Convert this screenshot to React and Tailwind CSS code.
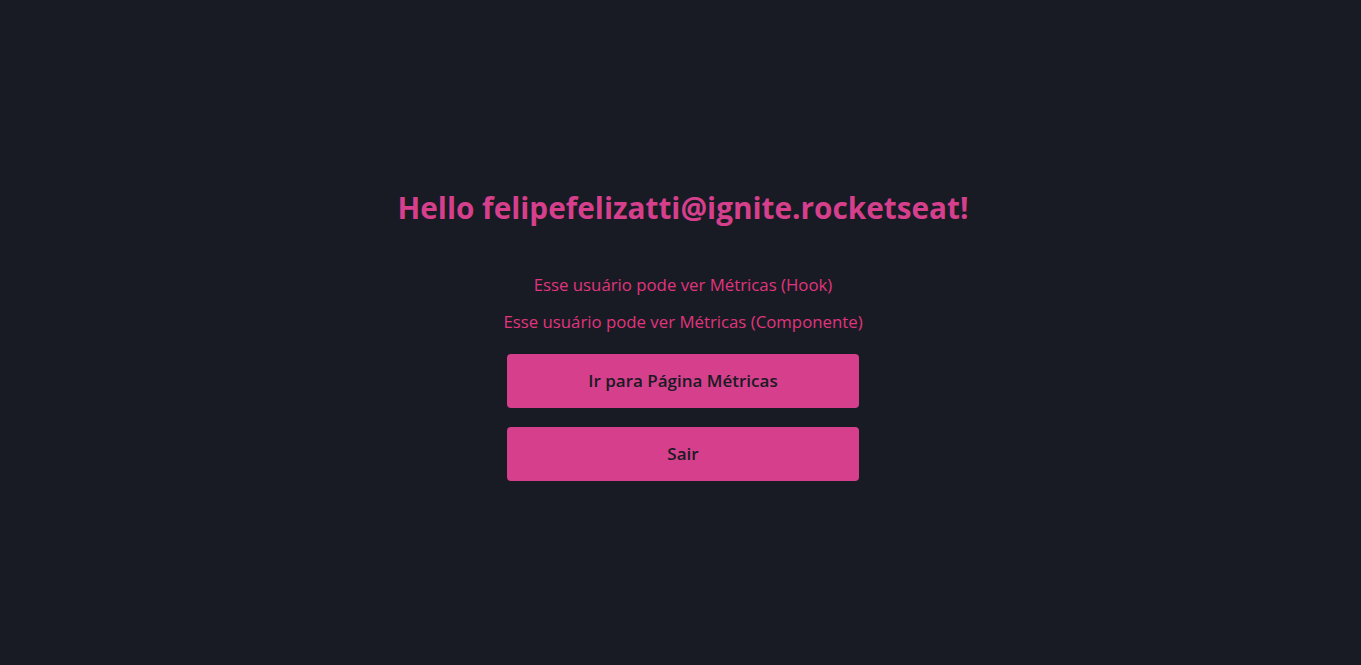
import React from 'react';

export default function App() {
  return (
    <div
      className="min-h-screen w-full bg-[#181b23] flex flex-col items-center justify-center pt-[6px] pl-[5px]"
      style={{ fontFamily: '"Open Sans", "Noto Sans", sans-serif' }}
    >
      <h1 className="text-[29.75px] leading-[36px] font-bold text-[#d53f8c]">
        Hello felipefelizatti@ignite.rocketseat!
      </h1>

      <p className="mt-[47px] text-[16.8px] leading-[24px] text-[#e0347f]">
        Esse usuário pode ver Métricas (Hook)
      </p>
      <p className="mt-[13px] text-[16.8px] leading-[24px] text-[#e0347f]">
        Esse usuário pode ver Métricas (Componente)
      </p>

      <button className="mt-[20px] w-[352px] h-[54px] rounded bg-[#d53f8c] text-[#181b23] text-[17px] font-semibold">
        Ir para Página Métricas
      </button>
      <button className="mt-[19px] w-[352px] h-[54px] rounded bg-[#d53f8c] text-[#181b23] text-[17px] font-semibold">
        Sair
      </button>
    </div>
  );
}
